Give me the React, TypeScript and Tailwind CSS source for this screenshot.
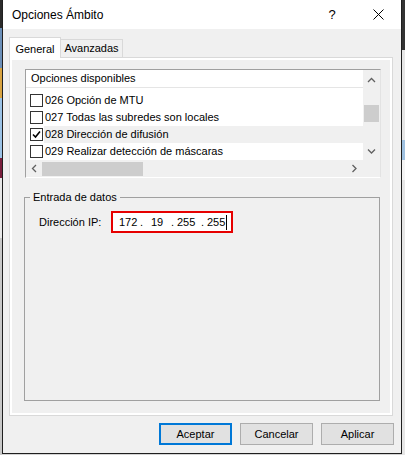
import { useState } from "react";

const options = [
  { id: "026", label: "Opción de MTU", checked: false },
  { id: "027", label: "Todas las subredes son locales", checked: false },
  { id: "028", label: "Dirección de difusión", checked: true, selected: true },
  { id: "029", label: "Realizar detección de máscaras", checked: false },
];

function Chevron({ dir }: { dir: "up" | "down" | "left" | "right" }) {
  const d = {
    up: "M1 5 L4.5 1.5 L8 5",
    down: "M1 1.5 L4.5 5 L8 1.5",
    left: "M5 1 L1.5 4.5 L5 8",
    right: "M1.5 1 L5 4.5 L1.5 8",
  }[dir];
  const vertical = dir === "up" || dir === "down";
  return (
    <svg
      width={vertical ? 9 : 7}
      height={vertical ? 7 : 9}
      viewBox={vertical ? "0 0 9 7" : "0 0 7 9"}
      fill="none"
      stroke="#606060"
      strokeWidth="1.3"
    >
      <path d={d} />
    </svg>
  );
}

function Checkbox({ checked }: { checked: boolean }) {
  return (
    <div className="flex h-[13px] w-[13px] shrink-0 items-center justify-center border border-[#333333] bg-white">
      {checked && (
        <svg width="9" height="9" viewBox="0 0 9 9" fill="none" stroke="#000" strokeWidth="1.6">
          <path d="M1 4.5 L3.5 7 L8 1.5" />
        </svg>
      )}
    </div>
  );
}

export default function App() {
  const [tab, setTab] = useState("general");

  return (
    <div className="flex h-[455px] w-[405px] overflow-hidden bg-[#d4d4d4] font-['Liberation_Sans',Arial,sans-serif] text-[11px] text-black">
      {/* desktop behind, left edge */}
      <div className="flex w-[2px] flex-col">
        <div className="h-[28px] bg-[#2b2b2b]" />
        <div className="h-[40px] bg-[#6b8fb8]" />
        <div className="h-[30px] bg-[#d9a441]" />
        <div className="h-[60px] bg-[#9cc3e6]" />
        <div className="h-[20px] bg-[#7a1f3d]" />
        <div className="h-[60px] bg-[#e8e8e8]" />
        <div className="flex-1 bg-[#c8c8c8]" />
      </div>

      {/* dialog window */}
      <div className="flex h-[454px] w-[400px] flex-col border-x border-b border-[#1f1f1f] bg-[#f0f0f0]">
        {/* title bar */}
        <div className="flex h-[29px] shrink-0 items-center bg-white">
          <span className="pl-[9px] text-[12px] leading-none">Opciones Ámbito</span>
          <div className="flex-1" />
          <div className="flex h-full w-[46px] items-center justify-center text-[13px]">?</div>
          <div className="flex h-full w-[46px] items-center justify-center">
            <svg width="11" height="11" viewBox="0 0 11 11" stroke="#000" strokeWidth="1">
              <path d="M0.5 0.5 L10.5 10.5 M10.5 0.5 L0.5 10.5" />
            </svg>
          </div>
        </div>

        {/* tabs */}
        <div className="flex flex-col pl-[6px] pr-[8px] pt-[8px]">
          <div className="flex h-[20px] items-end">
            <button
              onClick={() => setTab("general")}
              className="relative z-10 mb-[-1px] flex h-[21px] w-[52px] items-start justify-center border border-b-0 border-[#d9d9d9] bg-white pt-[3px]"
            >
              General
            </button>
            <button
              onClick={() => setTab("avanzadas")}
              className="flex h-[18px] w-[62px] items-center justify-center border border-b-0 border-l-0 border-[#d9d9d9] bg-[#f0f0f0]"
            >
              Avanzadas
            </button>
          </div>

          {/* tab panel */}
          <div className="h-[359px] border border-[#d9d9d9] bg-white p-[2px]">
            <div className="flex h-full flex-col bg-[#f0f0f0]">
              {/* list view */}
              <div className="ml-[13px] mt-[9px] flex h-[109px] w-[356px] flex-col border border-b-white border-l-[#a0a0a0] border-r-[#e3e3e3] border-t-[#a0a0a0] bg-white">
                <div className="flex h-[90px]">
                  <div className="flex flex-1 flex-col">
                    <div className="flex h-[18px] items-center border-b border-[#e5e5e5] pl-[5px]">
                      Opciones disponibles
                    </div>
                    <div className="flex flex-col pt-[4px]">
                      {options.map((o) => (
                        <div key={o.id} className="flex h-[17px] items-center pl-[4px]">
                          <Checkbox checked={o.checked} />
                          <div
                            className={
                              "ml-[1px] flex h-full flex-1 items-center pl-[1px] " +
                              (o.selected ? "bg-[#f0f0f0]" : "")
                            }
                          >
                            {o.id} {o.label}
                          </div>
                        </div>
                      ))}
                    </div>
                  </div>
                  {/* vertical scrollbar */}
                  <div className="flex w-[17px] flex-col items-center bg-[#f0f0f0]">
                    <div className="flex h-[17px] w-full items-center justify-center pt-[4px]">
                      <Chevron dir="up" />
                    </div>
                    <div className="mt-[18px] h-[17px] w-[15px] bg-[#cdcdcd]" />
                    <div className="flex-1" />
                    <div className="flex h-[17px] w-full items-center justify-center">
                      <Chevron dir="down" />
                    </div>
                  </div>
                </div>
                {/* horizontal scrollbar */}
                <div className="flex h-[17px]">
                  <div className="flex flex-1 items-center bg-[#f0f0f0]">
                    <div className="flex w-[16px] justify-center">
                      <Chevron dir="left" />
                    </div>
                    <div className="h-[14px] w-[101px] bg-[#cdcdcd]" />
                    <div className="flex-1" />
                    <div className="flex w-[17px] justify-center">
                      <Chevron dir="right" />
                    </div>
                  </div>
                  <div className="w-[17px] bg-[#f0f0f0]" />
                </div>
              </div>

              {/* group box */}
              <fieldset className="ml-[12px] mt-[13px] h-[210px] w-[356px] border border-[#a0a0a0]">
                <legend className="ml-[5px] px-[3px] leading-[13px]">Entrada de datos</legend>
                <div className="mt-[7px] flex items-center pl-[14px]">
                  <span className="w-[72px]">Dirección IP:</span>
                  <div className="flex h-[22px] w-[122px] items-center border-2 border-[#e60000] bg-white pl-[6px] text-[11px]">
                    <span className="w-[21px] shrink-0">172</span>
                    <span className="w-[11px] shrink-0">.</span>
                    <span className="w-[20px] shrink-0">19</span>
                    <span className="w-[6px] shrink-0">.</span>
                    <span className="w-[24px] shrink-0">255</span>
                    <span className="w-[6px] shrink-0">.</span>
                    <span className="shrink-0">255</span>
                    <span className="ml-[1px] h-[15px] w-px shrink-0 bg-black" />
                  </div>
                </div>
              </fieldset>
            </div>
          </div>
        </div>

        {/* buttons */}
        <div className="mt-[7px] flex justify-end gap-[8px] pr-[7px]">
          <button className="h-[22px] w-[73px] border-2 border-[#0078d7] bg-[#e1e1e1]">Aceptar</button>
          <button className="h-[22px] w-[73px] border border-[#adadad] bg-[#e1e1e1]">Cancelar</button>
          <button className="h-[22px] w-[73px] border border-[#adadad] bg-[#e1e1e1]">Aplicar</button>
        </div>
      </div>

      {/* desktop behind, right edge */}
      <div className="flex w-[3px] flex-col">
        <div className="h-[50px] bg-[#333333]" />
        <div className="h-[90px] bg-[#e6e6e6]" />
        <div className="h-[20px] bg-[#9fc1e0]" />
        <div className="h-[20px] bg-[#f4f4f4]" />
        <div className="flex-1 bg-[#e6e6e6]" />
      </div>
    </div>
  );
}
